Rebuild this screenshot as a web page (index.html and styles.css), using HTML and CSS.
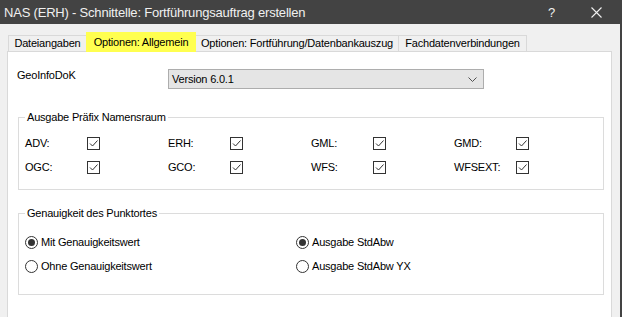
FILE: index.html
```html
<!DOCTYPE html>
<html lang="de">
<head>
<meta charset="utf-8">
<title>NAS (ERH) - Schnittelle</title>
<link rel="stylesheet" href="styles.css">
</head>
<body>
<div class="window">
  <div class="titlebar">
    <span class="title">NAS (ERH) - Schnittelle: Fortführungsauftrag erstellen</span>
    <span class="help">?</span>
    <svg class="close" width="11" height="11" viewBox="0 0 11 11"><path d="M0.5 0.5 L10.5 10.5 M10.5 0.5 L0.5 10.5" stroke="#f0f0f0" stroke-width="1.1" fill="none"/></svg>
  </div>
  <div class="client">
    <div class="tabs">
      <div class="tab tab-files">Dateiangaben</div>
      <div class="tab tab-active">Optionen: Allgemein</div>
      <div class="tab tab-update">Optionen: Fortführung/Datenbankauszug</div>
      <div class="tab tab-data">Fachdatenverbindungen</div>
    </div>
    <div class="panel">
      <div class="geo-row">
        <span class="geo-label">GeoInfoDoK</span>
        <div class="select">
          <span class="select-value">Version 6.0.1</span>
          <svg class="chevron" width="9" height="5" viewBox="0 0 9 5"><path d="M0.5 0.5 L4.5 4.5 L8.5 0.5" stroke="#505050" stroke-width="1" fill="none"/></svg>
        </div>
      </div>

      <fieldset class="group group-prefix">
        <legend>Ausgabe Präfix Namensraum</legend>
        <div class="check-grid">
          <div class="check-cell"><span class="check-label">ADV:</span><span class="checkbox"><svg width="11" height="11" viewBox="0 0 11 11"><path d="M2 5.5 L4.5 8 L9.5 2.5" stroke="#333" stroke-width="1" fill="none"/></svg></span></div>
          <div class="check-cell"><span class="check-label">ERH:</span><span class="checkbox"><svg width="11" height="11" viewBox="0 0 11 11"><path d="M2 5.5 L4.5 8 L9.5 2.5" stroke="#333" stroke-width="1" fill="none"/></svg></span></div>
          <div class="check-cell"><span class="check-label">GML:</span><span class="checkbox"><svg width="11" height="11" viewBox="0 0 11 11"><path d="M2 5.5 L4.5 8 L9.5 2.5" stroke="#333" stroke-width="1" fill="none"/></svg></span></div>
          <div class="check-cell"><span class="check-label">GMD:</span><span class="checkbox"><svg width="11" height="11" viewBox="0 0 11 11"><path d="M2 5.5 L4.5 8 L9.5 2.5" stroke="#333" stroke-width="1" fill="none"/></svg></span></div>
          <div class="check-cell"><span class="check-label">OGC:</span><span class="checkbox"><svg width="11" height="11" viewBox="0 0 11 11"><path d="M2 5.5 L4.5 8 L9.5 2.5" stroke="#333" stroke-width="1" fill="none"/></svg></span></div>
          <div class="check-cell"><span class="check-label">GCO:</span><span class="checkbox"><svg width="11" height="11" viewBox="0 0 11 11"><path d="M2 5.5 L4.5 8 L9.5 2.5" stroke="#333" stroke-width="1" fill="none"/></svg></span></div>
          <div class="check-cell"><span class="check-label">WFS:</span><span class="checkbox"><svg width="11" height="11" viewBox="0 0 11 11"><path d="M2 5.5 L4.5 8 L9.5 2.5" stroke="#333" stroke-width="1" fill="none"/></svg></span></div>
          <div class="check-cell"><span class="check-label">WFSEXT:</span><span class="checkbox"><svg width="11" height="11" viewBox="0 0 11 11"><path d="M2 5.5 L4.5 8 L9.5 2.5" stroke="#333" stroke-width="1" fill="none"/></svg></span></div>
        </div>
      </fieldset>

      <fieldset class="group group-accuracy">
        <legend>Genauigkeit des Punktortes</legend>
        <div class="radio-grid">
          <div class="radio-cell"><span class="radio radio-on"></span><span>Mit Genauigkeitswert</span></div>
          <div class="radio-cell"><span class="radio radio-on"></span><span>Ausgabe StdAbw</span></div>
          <div class="radio-cell"><span class="radio"></span><span>Ohne Genauigkeitswert</span></div>
          <div class="radio-cell"><span class="radio"></span><span>Ausgabe StdAbw YX</span></div>
        </div>
      </fieldset>
    </div>
  </div>
</div>
</body>
</html>
```

FILE: styles.css
```css
* { box-sizing: border-box; }

html, body {
  margin: 0;
  padding: 0;
}

body {
  width: 622px;
  height: 317px;
  overflow: hidden;
  background: #f0f0f0;
  font-family: "Liberation Sans", Arial, sans-serif;
  font-size: 11px;
  letter-spacing: -0.2px;
  color: #000;
}

.window {
  display: flex;
  flex-direction: column;
  height: 317px;
}

.titlebar {
  height: 24px;
  flex: none;
  background: #434343;
  color: #f0f0f0;
  display: flex;
  align-items: center;
}

.title {
  margin-left: 4px;
  font-size: 13px;
  letter-spacing: -0.2px;
}

.help {
  margin-left: auto;
  font-size: 13px;
  margin-right: 36px;
}

.close {
  margin-right: 20px;
}

.client {
  flex: 1;
  display: flex;
  flex-direction: column;
  padding-left: 7px;
  border-right: 2px solid #434343;
  min-height: 0;
}

.tabs {
  height: 27px;
  flex: none;
  display: flex;
  align-items: flex-end;
  padding-left: 1px;
}

.tab {
  height: 16px;
  line-height: 15px;
  border: 1px solid #d9d9d9;
  border-bottom: none;
  background: #f0f0f0;
  text-align: center;
  white-space: nowrap;
}

.tab + .tab {
  margin-left: -1px;
}

.tab-files { width: 79px; }
.tab-update { width: 204px; }
.tab-data { width: 129px; }

.tab-active {
  width: 110px;
  height: 20px;
  line-height: 20px;
  margin-bottom: -1px;
  background: #ffff50;
  border: none;
  position: relative;
  z-index: 1;
}

.panel {
  flex: 1;
  width: 605px;
  background: #fff;
  border: 1px solid #d9d9d9;
  border-bottom: none;
}

.geo-row {
  display: flex;
  align-items: flex-start;
  margin-top: 17px;
  padding-left: 9px;
}

.geo-label {
  width: 151px;
  line-height: 13px;
}

.select {
  width: 316px;
  height: 20px;
  background: #e5e5e5;
  border: 1px solid #adadad;
  display: flex;
  align-items: center;
  padding-left: 3px;
  padding-right: 6px;
}

.chevron {
  margin-left: auto;
}

.group {
  margin: 22px 0 0 10px;
  padding: 0;
  width: 586px;
  min-width: 0;
  border: 1px solid #dcdcdc;
}

.group legend {
  margin-left: 6px;
  padding: 0 2px;
  line-height: 13px;
}

.check-grid {
  display: grid;
  grid-template-columns: repeat(4, 143px);
  grid-auto-rows: 24px;
  padding: 7px 0 10px 6px;
}

.check-cell {
  display: flex;
  align-items: center;
}

.check-label {
  width: 62px;
}

.checkbox {
  width: 13px;
  height: 13px;
  border: 1px solid #333;
  display: flex;
  align-items: center;
  justify-content: center;
  background: #fff;
}

.group-accuracy {
  margin-top: 17px;
}

.radio-grid {
  display: grid;
  grid-template-columns: 271px 271px;
  grid-auto-rows: 24px;
  padding: 10px 0 16px 6px;
}

.radio-cell {
  display: flex;
  align-items: center;
  gap: 3px;
}

.radio {
  width: 13px;
  height: 13px;
  border: 1px solid #333;
  border-radius: 50%;
  display: flex;
  align-items: center;
  justify-content: center;
  background: #fff;
}

.radio-on::after {
  content: "";
  width: 7px;
  height: 7px;
  border-radius: 50%;
  background: #333;
}
```
